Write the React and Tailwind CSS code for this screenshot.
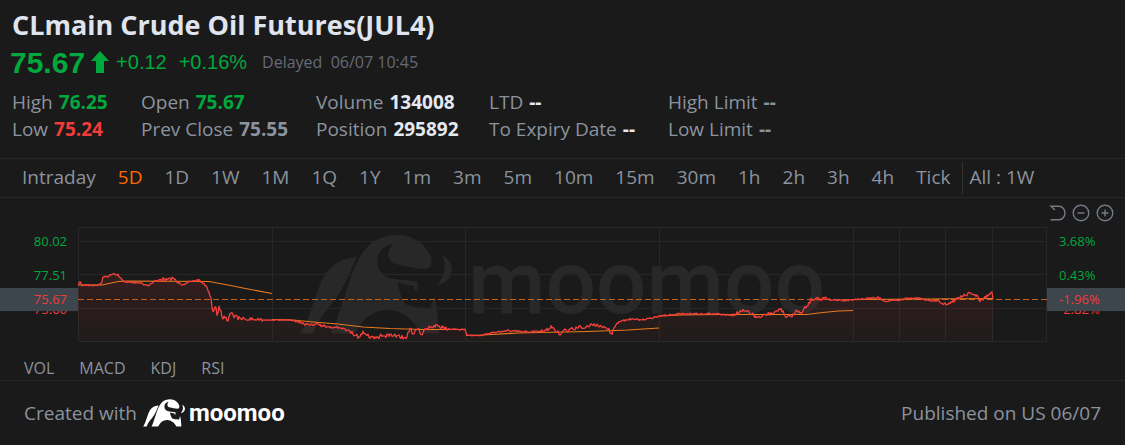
import React from "react";
import clsx from "clsx";

const stats = [
  [
    { label: "High", value: "76.25", tone: "text-[#00a83e] font-bold" },
    { label: "Low", value: "75.24", tone: "text-[#f23c39] font-bold" },
  ],
  [
    { label: "Open", value: "75.67", tone: "text-[#00a83e] font-bold" },
    { label: "Prev Close", value: "75.55", tone: "text-[#8b939e] font-bold" },
  ],
  [
    { label: "Volume", value: "134008", tone: "text-[#e4e9f2] font-bold" },
    { label: "Position", value: "295892", tone: "text-[#e4e9f2] font-bold" },
  ],
  [
    { label: "LTD", value: "--", tone: "text-[#e4e9f2] font-bold" },
    { label: "To Expiry Date", value: "--", tone: "text-[#e4e9f2] font-bold" },
  ],
  [
    { label: "High Limit", value: "--", tone: "text-[#8b939e] font-bold" },
    { label: "Low Limit", value: "--", tone: "text-[#8b939e] font-bold" },
  ],
];

const periods = [
  "Intraday", "5D", "1D", "1W", "1M", "1Q", "1Y", "1m", "3m", "5m",
  "10m", "15m", "30m", "1h", "2h", "3h", "4h", "Tick",
];

const indicators = ["VOL", "MACD", "KDJ", "RSI"];

const CHART_W = 969;
const CHART_H = 115;

const price = [
  [0, 59], [2, 54], [4, 58], [10, 58.5], [23, 57.5], [25, 50], [30, 49.5],
  [33, 47.5], [40, 48], [46, 54.5], [52, 55.5], [62, 55.5], [70, 59], [77, 53.5],
  [85, 52.5], [95, 52], [100, 55.5], [105, 58], [110, 55], [115, 54], [121, 53.5],
  [125, 56.5], [129, 60.5], [133, 71], [135, 85], [137, 78], [139, 89], [141, 82],
  [145, 90], [150, 91], [154, 87], [157, 91], [170, 92], [182, 92.5], [189, 93],
  [212, 93], [220, 94.5], [227, 97.5], [237, 97.5], [255, 100.5], [262, 100.5],
  [274, 105.5], [280, 110], [285, 105], [290, 108], [297, 112], [302, 109],
  [312, 108], [322, 109], [328, 111], [333, 101], [335, 108], [340, 100],
  [343, 107], [349, 102], [359, 98.5], [369, 102], [387, 102.5], [389, 108.5],
  [402, 108.5], [412, 106], [429, 103.5], [445, 104.5], [464, 104.5], [474, 100],
  [482, 107], [489, 103], [502, 100.5], [514, 98], [522, 100], [530, 101.5],
  [534, 107], [536, 100], [542, 94.5], [552, 92], [562, 93], [575, 91], [582, 89],
  [602, 87], [635, 87], [655, 88], [665, 83], [674, 87], [679, 91], [685, 88],
  [697, 86], [703, 81.5], [708, 91], [715, 88], [719, 83], [723, 87], [729, 78],
  [734, 72], [747, 72], [755, 73], [769, 73.5], [784, 72], [800, 70.5], [807, 74],
  [822, 73], [827, 71.5], [840, 71], [847, 73], [859, 73.5], [864, 77], [872, 76],
  [879, 72], [884, 69], [892, 66.5], [899, 69], [902, 74], [909, 69], [914, 65.5],
  [915, 72],
];

// [from, to, tick noise]
const noise = [
  [0, 46, 1], [84, 98, 2], [99, 133, 1.2], [134, 160, 3], [160, 188, 1.6],
  [188, 218, 0.4], [218, 272, 1.2], [272, 352, 2.2], [352, 370, 1.6], [370, 410, 0.5],
  [464, 540, 2.2], [655, 730, 1.6], [730, 752, 2], [858, 915, 1.4],
];

const averages = [
  "0,58 24,58 40,54.5 50,54 131,54.5 150,58 170,62 194,66.5",
  "194,92.5 215,93 235,95 260,97 285,100 312,101.5 345,102.5 387,102.5",
  "388,108.5 405,108 440,106 510,104.5 550,103 581,101",
  "582,89 602,88 640,87.5 728,87.5 745,85.5 760,84 775,83.5",
  "775,72.5 915,71.5",
];

function buildLine() {
  const out = [];
  for (let i = 0; i < price.length - 1; i++) {
    const [x0, y0] = price[i];
    const [x1, y1] = price[i + 1];
    for (let x = x0; x < x1; x++) {
      const band = noise.find(([a, b]) => x >= a && x < b);
      const amp = band ? band[2] : 0.8;
      const r = Math.sin(x * 127.1) * 43758.5453;
      const jitter = (r - Math.floor(r) - 0.5) * 2 * amp;
      const y = y0 + ((y1 - y0) * (x - x0)) / (x1 - x0) + jitter;
      out.push(`${x},${Math.min(y, 113.5).toFixed(1)}`);
    }
  }
  out.push("915,72");
  return out.join(" ");
}

const line = buildLine();

function Bull({ className }) {
  return (
    <svg viewBox="30 45 458 298" className={className} fill="currentColor" aria-hidden="true">
      <path d="M30 342C52 318 68 250 92 190C112 142 150 113 200 111C184 150 170 185 150 218C120 265 84 292 70 342Z" />
      <path d="M123 342C142 305 152 265 168 218C188 158 204 108 238 76C262 53 295 45 325 45C372 45 412 76 425 112C430 132 424 147 406 147C380 146 345 139 318 132C292 124 288 92 312 71C284 75 263 96 263 124C263 155 285 174 318 178L384 185L384 212C378 218 374 208 374 199L324 189C330 215 336 240 350 255C375 264 405 265 422 264C428 252 432 240 434 228C446 262 444 310 449 342L394 342C374 300 338 272 295 270C248 270 216 300 196 342Z" />
      <path d="M457 105C476 115 488 132 488 150C484 176 468 192 443 194C458 178 466 160 466 143C467 130 464 118 457 105Z" />
    </svg>
  );
}

function Header() {
  return (
    <header className="px-3 pt-1.5 pb-[15px]">
      <h1 className="text-[27px] leading-[38px] font-bold text-[#dfe4ee]">
        CLmain Crude Oil Futures(JUL4)
      </h1>
      <div className="flex items-center h-9 -ml-0.5 text-[#00a83e] font-['Liberation_Sans',Arial,sans-serif]">
        <span className="text-[30px] font-bold">75.67</span>
        <svg viewBox="0 0 18 22" className="w-[18px] h-[22px] ml-1.5" fill="currentColor" aria-hidden="true">
          <path d="M9 0L18 10H13V22H5V10H0Z" />
        </svg>
        <span className="ml-[7px] text-xl">+0.12</span>
        <span className="ml-3 text-xl">+0.16%</span>
        <span className="ml-[15px] text-base text-[#656b76] font-['Open_Sans','Noto_Sans',sans-serif]">
          Delayed&nbsp; 06/07 10:45
        </span>
      </div>
      <div className="mt-[9px] grid grid-cols-[129px_175px_173px_179px_1fr]">
        {stats.map((col) => (
          <dl key={col[0].label}>
            {col.map((s) => (
              <div key={s.label} className="flex gap-1.5 text-[19px] leading-[27px]">
                <dt>{s.label}</dt>
                <dd className={s.tone}>{s.value}</dd>
              </div>
            ))}
          </dl>
        ))}
      </div>
    </header>
  );
}

function Periods() {
  return (
    <nav className="flex items-center h-10 pl-[22px] border-y border-[#262626] text-[19px]">
      <div className="flex gap-[22px] pb-0.5">
        {periods.map((p) => (
          <button key={p} type="button" className={clsx(p === "5D" && "text-[#ff6900]")}>
            {p}
          </button>
        ))}
      </div>
      <div className="ml-3 pl-1.5 pb-0.5 h-8 flex items-center border-l border-[#333333]">
        <button type="button">All : 1W</button>
      </div>
    </nav>
  );
}

function Tools() {
  return (
    <div className="flex justify-end gap-1.5 pt-1.5 pr-[11px] h-[29px] text-[#747b87]">
      <button type="button" aria-label="Reset" className="w-[18px] h-[18px]">
        <svg viewBox="0 0 18 18" fill="none" stroke="currentColor" strokeWidth="1.4">
          <path d="M7 6L3 2.2H11A6 6.8 0 0 1 11 15.8H2.5" />
        </svg>
      </button>
      <button type="button" aria-label="Zoom out" className="w-[18px] h-[18px]">
        <svg viewBox="0 0 18 18" fill="none" stroke="currentColor" strokeWidth="1.4">
          <circle cx="9" cy="9" r="7.8" />
          <path d="M5.5 9H12.5" />
        </svg>
      </button>
      <button type="button" aria-label="Zoom in" className="w-[18px] h-[18px]">
        <svg viewBox="0 0 18 18" fill="none" stroke="currentColor" strokeWidth="1.4">
          <circle cx="9" cy="9" r="7.8" />
          <path d="M5.5 9H12.5M9 5.5V12.5" />
        </svg>
      </button>
    </div>
  );
}

function Axis({ labels, current, className }) {
  return (
    <div className={clsx("relative w-[78px] shrink-0 -mt-[3px] text-[13px] leading-[34px] text-[#00a83e]", className)}>
      <div>{labels[0]}</div>
      <div>{labels[1]}</div>
      <div className="text-[#f23c39]">{labels[2]}</div>
      <div className={clsx("absolute inset-x-0 top-16 h-[23px] leading-[23px] bg-[#3d454d] text-[#f23c39]", className)}>
        {current}
      </div>
    </div>
  );
}

function Chart() {
  return (
    <div className="flex h-[115px]">
      <Axis labels={["80.02", "77.51", "75.00"]} current="75.67" className="text-right pr-[11px]" />
      <div className="relative flex-1 min-w-0">
        <div className="absolute inset-0 flex items-center justify-center gap-4 text-[#282828]">
          <Bull className="w-[152px] h-[99px] shrink-0" />
          <span className="pb-1 text-[89px] leading-none font-medium font-['Roboto',sans-serif]">moomoo</span>
        </div>
        <svg
          viewBox={`0 0 ${CHART_W} ${CHART_H}`}
          preserveAspectRatio="none"
          className="relative block w-full h-full"
          fill="none"
        >
          <defs>
            <linearGradient id="area" x1="0" y1="0" x2="0" y2="1">
              <stop offset="0" stopColor="#f23c39" stopOpacity="0.12" />
              <stop offset="1" stopColor="#f23c39" stopOpacity="0.03" />
            </linearGradient>
          </defs>
          <g stroke="#272727">
            {[0.5, 14.5, 47.5, 81.5, 114.5].map((y) => (
              <path key={y} d={`M0 ${y}H${CHART_W}`} />
            ))}
            {[0.5, 194.5, 387.5, 581.5, 775.5, 821.5, 867.5, 914.5, 968.5].map((x) => (
              <path key={x} d={`M${x} 0V${CHART_H}`} />
            ))}
          </g>
          <polygon points={`0,115 ${line} 915,115`} fill="url(#area)" />
          <path d={`M0 72.5H${CHART_W}`} stroke="#c4621c" strokeDasharray="6 3" />
          {averages.map((pts) => (
            <polyline key={pts} points={pts} stroke="#e97a1f" strokeWidth="1.2" />
          ))}
          <polyline points={line} stroke="#f5403c" strokeWidth="1.3" strokeLinejoin="round" />
        </svg>
      </div>
      <Axis labels={["3.68%", "0.43%", "-2.82%"]} current="-1.96%" className="pl-3" />
    </div>
  );
}

export default function App() {
  return (
    <div className="bg-[#1a1a1a] min-h-screen text-[#8b939e] font-['Open_Sans','Noto_Sans',sans-serif]">
      <Header />
      <Periods />
      <Tools />
      <Chart />
      <div className="flex items-center gap-[25px] h-[39px] pl-6 pt-3.5 border-b border-[#262626] text-base">
        {indicators.map((name) => (
          <button key={name} type="button">
            {name}
          </button>
        ))}
      </div>
      <footer className="flex items-center justify-between h-16 px-6 text-[19px]">
        <div className="flex items-center">
          <span>Created with</span>
          <Bull className="w-[42px] h-[30px] ml-1.5 text-white" />
          <span className="ml-1 text-2xl leading-none font-bold text-white font-['Roboto',sans-serif]">moomoo</span>
        </div>
        <span>Published on US 06/07</span>
      </footer>
    </div>
  );
}
